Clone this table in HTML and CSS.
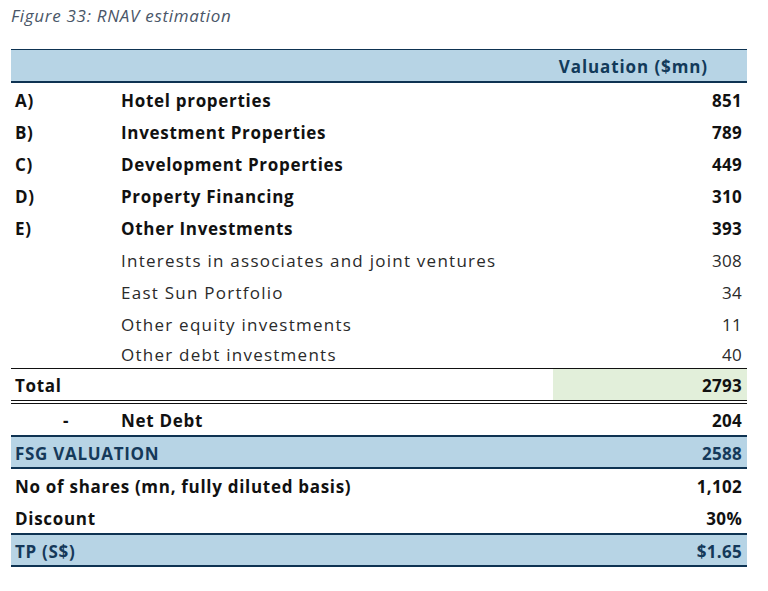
FILE: index.html
```html
<!DOCTYPE html>
<html>
<head>
<meta charset="utf-8">
<link rel="stylesheet" href="styles.css">
</head>
<body>
<div class="page">
  <div class="title">Figure 33: RNAV estimation</div>
  <div class="table">
    <div class="row head"><span class="c1"></span><span class="c2"></span><span class="c3 hval">Valuation ($mn)</span></div>
    <div class="row b"><span class="c1">A)</span><span class="c2">Hotel properties</span><span class="c3">851</span></div>
    <div class="row b"><span class="c1">B)</span><span class="c2">Investment Properties</span><span class="c3">789</span></div>
    <div class="row b"><span class="c1">C)</span><span class="c2">Development Properties</span><span class="c3">449</span></div>
    <div class="row b"><span class="c1">D)</span><span class="c2">Property Financing</span><span class="c3">310</span></div>
    <div class="row b"><span class="c1">E)</span><span class="c2">Other Investments</span><span class="c3">393</span></div>
    <div class="row n"><span class="c1"></span><span class="c2">Interests in associates and joint ventures</span><span class="c3">308</span></div>
    <div class="row n"><span class="c1"></span><span class="c2">East Sun Portfolio</span><span class="c3">34</span></div>
    <div class="row n"><span class="c1"></span><span class="c2">Other equity investments</span><span class="c3">11</span></div>
    <div class="row n last"><span class="c1"></span><span class="c2">Other debt investments</span><span class="c3">40</span></div>
    <div class="row b total"><span class="c12">Total</span><span class="c3 green">2793</span></div>
    <div class="row b net"><span class="c1 dash">-</span><span class="c2">Net Debt</span><span class="c3">204</span></div>
    <div class="row b band"><span class="c12">FSG VALUATION</span><span class="c3">2588</span></div>
    <div class="row b"><span class="c12">No of shares (mn, fully diluted basis)</span><span class="c3">1,102</span></div>
    <div class="row b"><span class="c12">Discount</span><span class="c3">30%</span></div>
    <div class="row b band tp"><span class="c12">TP (S$)</span><span class="c3">$1.65</span></div>
  </div>
</div>
</body>
</html>
```
FILE: styles.css
```css
html, body {
  margin: 0;
  padding: 0;
  background: #ffffff;
}
.page {
  padding: 5px 21px 0 11px;
  font-family: "Open Sans", "Lato", sans-serif;
  color: #111;
}
.title {
  font-style: italic;
  font-size: 17px;
  letter-spacing: 0.7px;
  color: #4a5668;
  height: 22px;
  line-height: 22px;
}
.table {
  margin-top: 22px;
  width: 736px;
}
.row {
  display: grid;
  grid-template-columns: 110px 432px 194px;
  height: 32px;
  align-items: center;
  font-size: 17px;
}
.row > span {
  white-space: nowrap;
}
.c1, .c2, .c12 { letter-spacing: 0.7px; padding-top: 2px; }
.c1 { padding-left: 4px; }
.c12 { grid-column: 1 / 3; padding-left: 4px; }
.c3 { text-align: right; padding-right: 5px; padding-top: 2px; box-sizing: border-box; height: 100%; display: flex; align-items: center; justify-content: flex-end; letter-spacing: 0.3px; }
.b { font-weight: 700; color: #111; }
.n { font-weight: 400; color: #2a2a2a; }
.n .c2 { letter-spacing: 1.25px; }
.head {
  background: #b7d4e5;
  border-top: 1px solid #0e3352;
  border-bottom: 2px solid #0e3352;
  height: 31px;
  font-weight: 700;
  color: #123a5a;
}
.c3.hval { padding-right: 39px; letter-spacing: 0.9px; }
.last { border-bottom: 1px solid #111; height: 29px; }
.total {
  height: 31px;
  border-bottom: 4px double #111;
}
.green { background: #e2efda; }
.dash { padding-left: 52px; }
.net { height: 31px; border-bottom: 2px solid #0e3352; }
.band {
  background: #b7d4e5;
  color: #15395a;
}
.row.band:not(.tp) { height: 30px; border-bottom: 2px solid #0e3352; }
.tp { border-top: 2px solid #0e3352; border-bottom: 2px solid #0e3352; height: 30px; }
```
